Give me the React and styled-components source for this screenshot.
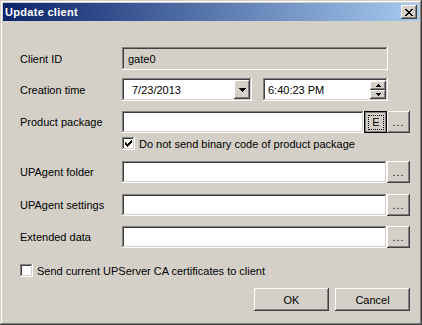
import styled, { createGlobalStyle, css } from 'styled-components';

const GlobalStyle = createGlobalStyle`
    html, body {
        margin: 0;
        padding: 0;
        background: #d4d0c8;
    }
    * {
        box-sizing: border-box;
    }
`

const raised = css`
    box-shadow: inset -1px -1px #404040, inset 1px 1px #ffffff,
        inset -2px -2px #808080, inset 2px 2px #d4d0c8;
`

const sunken = css`
    box-shadow: inset -1px -1px #ffffff, inset 1px 1px #808080,
        inset -2px -2px #d4d0c8, inset 2px 2px #404040;
`

const Window = styled.div`
    width: 422px;
    height: 325px;
    padding: 3px;
    background: #d4d0c8;
    display: flex;
    flex-direction: column;
    font-family: "Liberation Sans", Arial, sans-serif;
    font-size: 11px;
    color: #000;
    box-shadow: inset -1px -1px #404040, inset 1px 1px #d4d0c8,
        inset -2px -2px #808080, inset 2px 2px #ffffff;
`

const TitleBar = styled.div`
    height: 18px;
    display: flex;
    align-items: center;
    justify-content: space-between;
    padding: 0 2px 0 2px;
    background: linear-gradient(to right, #0a246a, #a6caf0);
`

const Title = styled.span`
    color: #fff;
    font-weight: bold;
    font-size: 11px;
    letter-spacing: 0.3px;
`

const CloseButton = styled.div`
    width: 16px;
    height: 14px;
    background: #d4d0c8;
    display: flex;
    align-items: center;
    justify-content: center;
    ${raised};
`

const Form = styled.div`
    flex: 1;
    display: flex;
    flex-direction: column;
    padding: 0 9px 0 17px;
`

const Row = styled.div`
    display: flex;
    align-items: center;
    margin-top: ${p => p.$top}px;
    padding-right: ${p => p.$right || 0}px;
    padding-left: ${p => p.$indent || 0}px;
    height: ${p => p.$h || 22}px;
`

const Label = styled.div`
    width: 102px;
    flex-shrink: 0;
`

const Field = styled.div`
    flex: ${p => (p.$w ? 'none' : 1)};
    width: ${p => (p.$w ? `${p.$w}px` : 'auto')};
    height: 100%;
    display: flex;
    align-items: center;
    padding: 0 3px 0 ${p => p.$pad || 4}px;
    background: ${p => (p.$disabled ? '#d4d0c8' : '#fff')};
    ${sunken};
`

const FieldText = styled.span`
    flex: 1;
`

const Gap = styled.div`
    width: ${p => p.$w}px;
    flex-shrink: 0;
`

const SmallButton = styled.div`
    width: ${p => p.$w || 23}px;
    height: 100%;
    flex-shrink: 0;
    display: flex;
    align-items: center;
    justify-content: center;
    background: #d4d0c8;
    ${raised};
`

const PressedButton = styled.div`
    width: 23px;
    height: 100%;
    flex-shrink: 0;
    display: flex;
    align-items: center;
    justify-content: center;
    background: #d4d0c8;
    border: 1px solid #000;
    box-shadow: inset 1px 1px #808080, inset -1px -1px #808080;
    padding: 1px 0 0 1px;
`

const Focus = styled.span`
    border: 1px dotted #000;
    padding: 1px 3px;
    line-height: 11px;
`

const ComboArrow = styled.div`
    width: 16px;
    height: 19px;
    display: flex;
    align-items: center;
    justify-content: center;
    background: #d4d0c8;
    ${raised};
`

const Spin = styled.div`
    width: 16px;
    display: flex;
    flex-direction: column;
`

const SpinPart = styled.div`
    height: 9px;
    display: flex;
    align-items: center;
    justify-content: center;
    background: #d4d0c8;
    ${raised};
`

const CheckRow = styled.label`
    display: flex;
    align-items: center;
    gap: 4px;
    margin-top: ${p => p.$top}px;
    padding-left: ${p => p.$indent || 0}px;
    height: 13px;
`

const Box = styled.span`
    width: 13px;
    height: 13px;
    background: #fff;
    display: flex;
    align-items: center;
    justify-content: center;
    ${sunken};
`

const ButtonBar = styled.div`
    display: flex;
    justify-content: flex-end;
    gap: 6px;
    margin-top: ${p => p.$top}px;
`

const Button = styled.div`
    width: 75px;
    height: 23px;
    display: flex;
    align-items: center;
    justify-content: center;
    background: #d4d0c8;
    ${raised};
`

const Check = () => (
    <svg width="7" height="7" viewBox="0 0 7 7" shapeRendering="crispEdges">
        <path d="M0 2h1v3H0zM1 3h1v3H1zM2 4h1v3H2zM3 3h1v3H3zM4 2h1v3H4zM5 1h1v3H5zM6 0h1v3H6z" fill="#000" />
    </svg>
)

const CloseGlyph = () => (
    <svg width="8" height="7" viewBox="0 0 8 7" shapeRendering="crispEdges">
        <path d="M0 0h2v1H0zM6 0h2v1H6zM1 1h2v1H1zM5 1h2v1H5zM2 2h4v1H2zM3 3h2v1H3zM2 4h4v1H2zM1 5h2v1H1zM5 5h2v1H5zM0 6h2v1H0zM6 6h2v1H6z" fill="#000" />
    </svg>
)

const Arrow = ({ up, size = 4 }) => {
    const w = size * 2 - 1
    const rows = []
    for (let i = 0; i < size; i++) {
        const y = up ? size - 1 - i : i
        rows.push(`M${i} ${y}h${w - 2 * i}v1H${i}z`)
    }
    return (
        <svg width={w} height={size} viewBox={`0 0 ${w} ${size}`} shapeRendering="crispEdges">
            <path d={rows.join('')} fill="#000" />
        </svg>
    )
}

const Dots = () => <span style={{ letterSpacing: '1px', marginTop: '-1px' }}>...</span>

const PathRow = ({ label, top }) => (
    <Row $top={top}>
        <Label>{label}</Label>
        <Field />
        <SmallButton><Dots /></SmallButton>
    </Row>
)

export default function App() {
    return (
        <>
            <GlobalStyle />
            <Window>
                <TitleBar>
                    <Title>Update client</Title>
                    <CloseButton><CloseGlyph /></CloseButton>
                </TitleBar>
                <Form>
                    <Row $top={26} $h={23} $right={22}>
                        <Label>Client ID</Label>
                        <Field $disabled $pad={6}><FieldText>gate0</FieldText></Field>
                    </Row>
                    <Row $top={8} $h={23} $right={22}>
                        <Label>Creation time</Label>
                        <Field $w={130} $pad={10} style={{ paddingRight: 2 }}>
                            <FieldText>7/23/2013</FieldText>
                            <ComboArrow><Arrow size={4} /></ComboArrow>
                        </Field>
                        <Gap $w={11} />
                        <Field $pad={5} style={{ paddingRight: 2 }}>
                            <FieldText>6:40:23 PM</FieldText>
                            <Spin>
                                <SpinPart><Arrow up size={3} /></SpinPart>
                                <SpinPart><Arrow size={3} /></SpinPart>
                            </Spin>
                        </Field>
                    </Row>
                    <Row $top={10}>
                        <Label>Product package</Label>
                        <Field />
                        <PressedButton><Focus>E</Focus></PressedButton>
                        <SmallButton><Dots /></SmallButton>
                    </Row>
                    <CheckRow $top={4} $indent={102}>
                        <Box><Check /></Box>
                        <span>Do not send binary code of product package</span>
                    </CheckRow>
                    <PathRow label="UPAgent folder" top={11} />
                    <PathRow label="UPAgent settings" top={11} />
                    <PathRow label="Extended data" top={10} />
                    <CheckRow $top={16}>
                        <Box />
                        <span>Send current UPServer CA certificates to client</span>
                    </CheckRow>
                    <ButtonBar $top={11}>
                        <Button>OK</Button>
                        <Button>Cancel</Button>
                    </ButtonBar>
                </Form>
            </Window>
        </>
    )
}
